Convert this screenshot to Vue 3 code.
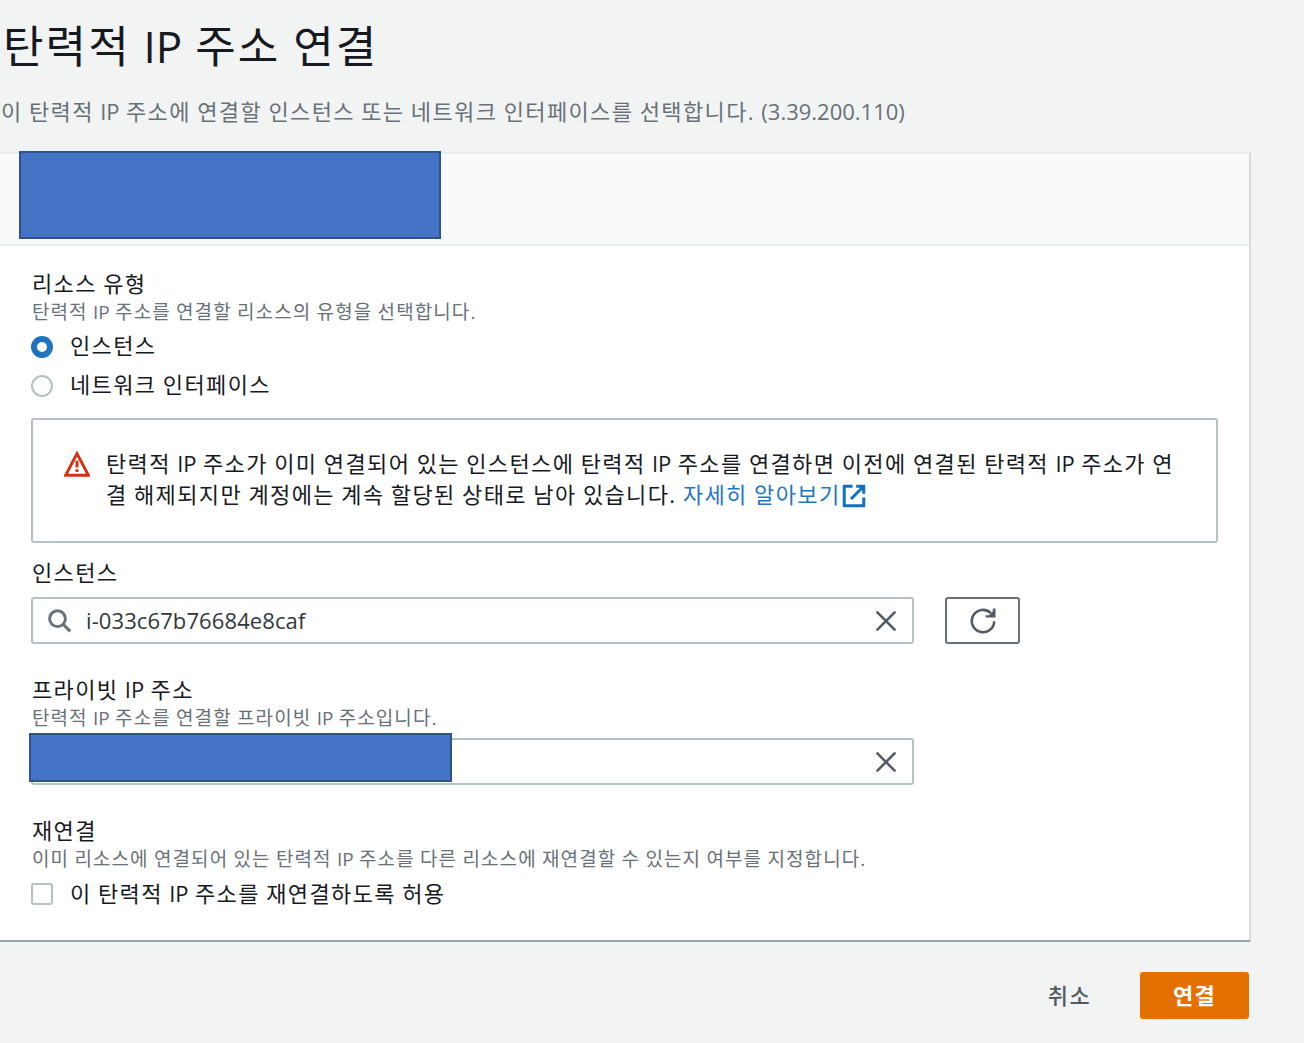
<template>
  <div class="page">
    <header class="page-header">
      <h1 class="title">탄력적 <span class="latin">IP</span> 주소 연결</h1>
      <p class="description">이 탄력적 <span class="latin">IP</span> 주소에 연결할 인스턴스 또는 네트워크 인터페이스를 선택합니다. <span class="latin">({{ elasticIp }})</span></p>
    </header>

    <section class="card">
      <div class="card-header">
        <div class="mask mask-header"></div>
      </div>

      <div class="card-body">
        <!-- 리소스 유형 -->
        <div class="field">
          <div class="label">리소스 유형</div>
          <div class="hint">탄력적 <span class="latin">IP</span> 주소를 연결할 리소스의 유형을 선택합니다.</div>
          <div class="radio-group">
            <label v-for="type in resourceTypes" :key="type.value" class="choice">
              <input v-model="resourceType" type="radio" name="resource" class="radio" :value="type.value" />
              <span class="choice-text">{{ type.label }}</span>
            </label>
          </div>
        </div>

        <!-- 경고 -->
        <div class="alert">
          <svg class="alert-icon" viewBox="0 0 16 16">
            <path d="M8 1.6 15 14.9H1z" />
            <path d="M8 6v4.2M8 11.2v1.7" />
          </svg>
          <p class="alert-text">
            <span class="alert-line">탄력적 <span class="latin">IP</span> 주소가 이미 연결되어 있는 인스턴스에 탄력적 <span class="latin">IP</span> 주소를 연결하면 이전에 연결된 탄력적 <span class="latin">IP</span> 주소가 연</span>
            <span class="alert-line">결 해제되지만 계정에는 계속 할당된 상태로 남아 있습니다. <a class="link">자세히 알아보기<svg class="external-icon" viewBox="0 0 16 16">
              <path d="M7 1.5H1.5v13h13V9" />
              <path d="M9.5 1.5h5V6.5M14.5 1.5 6 10" />
            </svg></a></span>
          </p>
        </div>

        <!-- 인스턴스 -->
        <div class="field field-instance">
          <div class="label">인스턴스</div>
          <div class="input-row">
            <div class="input-box">
              <svg class="search-icon" viewBox="0 0 24 24">
                <circle cx="9.5" cy="9.7" r="7.9" />
                <path d="M15.2 15.4 22.2 22.4" />
              </svg>
              <input v-model="instanceId" class="input" type="text" spellcheck="false" />
              <button class="clear-button" @click="instanceId = ''">
                <svg class="clear-icon" viewBox="0 0 20 20"><path d="M1.4 1.4 18.6 18.6M18.6 1.4 1.4 18.6" /></svg>
              </button>
            </div>
            <button class="refresh-button">
              <svg class="refresh-icon" viewBox="0 0 26 26">
                <path d="M24.2 13.2A11.2 11.2 0 1 1 20.9 5.1" />
                <path class="refresh-arrow" d="M25.5 0.4V9.6H15.6V7.2H19L22.8 3.6V0.4z" />
              </svg>
            </button>
          </div>
        </div>

        <!-- 프라이빗 IP -->
        <div class="field field-private">
          <div class="label">프라이빗 <span class="latin">IP</span> 주소</div>
          <div class="hint">탄력적 <span class="latin">IP</span> 주소를 연결할 프라이빗 <span class="latin">IP</span> 주소입니다.</div>
          <div class="input-box">
            <div class="mask mask-input"></div>
            <input class="input" type="text" />
            <button class="clear-button">
              <svg class="clear-icon" viewBox="0 0 20 20"><path d="M1.4 1.4 18.6 18.6M18.6 1.4 1.4 18.6" /></svg>
            </button>
          </div>
        </div>

        <!-- 재연결 -->
        <div class="field field-reassociate">
          <div class="label">재연결</div>
          <div class="hint">이미 리소스에 연결되어 있는 탄력적 <span class="latin">IP</span> 주소를 다른 리소스에 재연결할 수 있는지 여부를 지정합니다.</div>
          <label class="choice choice-check">
            <input v-model="allowReassociation" type="checkbox" class="checkbox" />
            <span class="choice-text">이 탄력적 <span class="latin">IP</span> 주소를 재연결하도록 허용</span>
          </label>
        </div>
      </div>
    </section>

    <footer class="actions">
      <button class="cancel-button">취소</button>
      <button class="submit-button">연결</button>
    </footer>
  </div>
</template>

<script setup>
import { ref } from 'vue'

const elasticIp = '3.39.200.110'

const resourceTypes = [
  { value: 'instance', label: '인스턴스' },
  { value: 'network', label: '네트워크 인터페이스' },
]

const resourceType = ref('instance')
const instanceId = ref('i-033c67b76684e8caf')
const allowReassociation = ref(false)
</script>

<style>
body {
  background: #f2f4f4;
}
</style>

<style scoped>
.page {
  box-sizing: border-box;
  height: 1043px;
  padding-top: 18px;
  overflow: hidden;
  background: #f2f4f4;
  color: #16191f;
  font-family: "Open Sans", "Noto Sans CJK KR", sans-serif;
  font-size: 22px;
  letter-spacing: 1.37px;
  word-spacing: -0.7px;
}

.page * {
  box-sizing: border-box;
}

button,
input {
  margin: 0;
  font: inherit;
  letter-spacing: inherit;
}

.latin {
  letter-spacing: 0;
}

.title {
  margin: 0;
  padding-left: 3px;
  font-size: 44px;
  font-weight: 400;
  line-height: 56px;
  letter-spacing: 2.1px;
  white-space: nowrap;
}

.description {
  margin: 20px 0 0;
  padding-left: 1px;
  line-height: 34px;
  color: #687078;
  white-space: nowrap;
}

.card {
  width: 1251px;
  height: 790px;
  margin-top: 24px;
  background: #fff;
  border-top: 2px solid #eaeded;
  border-right: 2px solid #d5dbdb;
  border-bottom: 2px solid #95a1a3;
  border-bottom-right-radius: 2px;
}

.card-header {
  position: relative;
  height: 92px;
  background: #fafafa;
  border-bottom: 2px solid #eaeded;
}

.mask {
  position: absolute;
  background: #4472c4;
  border: 2px solid #2f528f;
}

.mask-header {
  top: -3px;
  left: 19px;
  width: 422px;
  height: 88px;
}

.card-body {
  padding: 24px 31px 0 31px;
}

.label {
  height: 28px;
  padding-left: 1px;
  line-height: 26px;
}

.hint {
  padding-left: 1px;
  font-size: 19px;
  line-height: 28px;
  color: #687078;
  letter-spacing: 1.08px;
  white-space: nowrap;
}

.radio-group {
  padding-top: 1px;
}

.choice {
  display: flex;
  align-items: center;
  gap: 17px;
  height: 39px;
}

.choice-text {
  line-height: 28px;
  padding-bottom: 3px;
}

.radio,
.checkbox {
  appearance: none;
  width: 22px;
  height: 22px;
  border: 2px solid #b5c2c3;
  background: #fff;
}

.radio {
  border-radius: 50%;
}

.radio:checked {
  border: 6.5px solid #1f73bf;
}

.checkbox {
  border-radius: 3px;
}

.alert {
  display: flex;
  height: 125px;
  margin-top: 13px;
  padding: 28px 0 0 31px;
  border: 2px solid #b5c2c3;
  border-radius: 3px;
}

.alert-icon {
  width: 26px;
  height: 26px;
  margin: 3px 16px 0 0;
  fill: none;
  stroke: #d13212;
  stroke-width: 1.8;
}

.alert-text {
  margin: 0;
}

.alert-line {
  display: block;
  line-height: 31px;
  white-space: nowrap;
}

.link {
  color: #1f76c4;
}

.external-icon {
  width: 24px;
  height: 24px;
  margin-left: 1px;
  vertical-align: -5px;
  fill: none;
  stroke: #0f70bd;
  stroke-width: 2;
}

.field-instance {
  margin-top: 16px;
}

.input-row {
  display: flex;
  gap: 31px;
  margin-top: 10px;
}

.input-box {
  position: relative;
  display: flex;
  align-items: center;
  width: 883px;
  height: 47px;
  padding: 0 16px 0 15px;
  border: 2px solid #b5c2c3;
  border-radius: 3px;
  background: #fff;
}

.search-icon {
  width: 24px;
  height: 24px;
  margin-right: 14px;
  fill: none;
  stroke: #687078;
  stroke-width: 2.9;
}

.input {
  flex: 1;
  min-width: 0;
  padding: 0 0 2px;
  border: 0;
  outline: 0;
  background: none;
  color: #32373e;
  letter-spacing: 0.1px;
}

.clear-button {
  display: flex;
  padding: 0;
  border: 0;
  background: none;
}

.clear-icon {
  width: 20px;
  height: 20px;
  fill: none;
  stroke: #545b64;
  stroke-width: 2.6;
  stroke-linecap: round;
}

.refresh-button {
  display: flex;
  align-items: center;
  justify-content: center;
  width: 75px;
  height: 47px;
  padding: 0;
  border: 2px solid #687078;
  border-radius: 3px;
  background: #fff;
}

.refresh-icon {
  width: 26px;
  height: 26px;
  fill: none;
  stroke: #545b64;
  stroke-width: 2.6;
}

.refresh-arrow {
  fill: #545b64;
  stroke: none;
}

.field-private,
.field-reassociate {
  margin-top: 32px;
}

.field-private .input-box {
  margin-top: 6px;
}

.mask-input {
  top: -7px;
  left: -4px;
  width: 423px;
  height: 49px;
}

.choice-check {
  height: 28px;
  margin-top: 7px;
}

.actions {
  display: flex;
  justify-content: flex-end;
  align-items: center;
  gap: 49px;
  width: 1249px;
  margin-top: 30px;
}

.cancel-button {
  padding: 0 0 4px;
  border: 0;
  background: none;
  color: #545b64;
  font-weight: 500;
}

.submit-button {
  width: 109px;
  height: 47px;
  padding: 0 0 4px;
  border: 0;
  border-radius: 3px;
  background: #e47000;
  color: #fff;
  font-weight: 700;
}
</style>
